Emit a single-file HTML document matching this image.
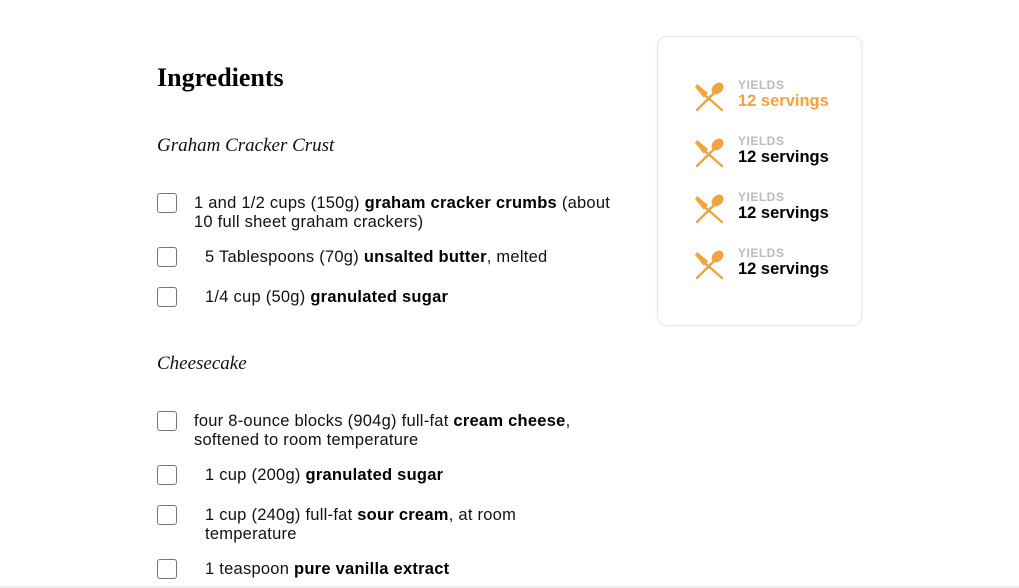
<!DOCTYPE html>
<html><head><meta charset="utf-8"><style>
body{margin:0;width:1019px;height:588px;background:#fff;position:relative;overflow:hidden;font-family:"Liberation Sans",sans-serif;color:#111}
h2{position:absolute;margin:0;left:157px;top:63px;font:bold 26px "Liberation Serif",serif;color:#000}
.sub{position:absolute;font:italic 19px "Liberation Serif",serif;left:157px;color:#111}
.cb{position:absolute;left:157px;width:18px;height:18px;border:1px solid #777;border-radius:3px}
.t{position:absolute;font-size:16.5px;line-height:19px;letter-spacing:0.25px;white-space:nowrap}
b{font-weight:bold;color:#000}
.card{position:absolute;left:657px;top:36px;width:203px;height:288px;border:1px solid #e8e8e8;border-radius:10px;box-shadow:0 0 4px rgba(0,0,0,.06)}
.y{position:absolute;left:738px;font-size:12px;font-weight:bold;color:#bbb;letter-spacing:.5px}
.s{position:absolute;left:738px;font-size:16.5px;font-weight:bold;color:#000}
.ic{position:absolute;left:694px}
.bot{position:absolute;left:0;top:586px;width:1019px;height:2px;background:#eee}
</style></head><body>
<h2>Ingredients</h2>
<div class="sub" style="top:135px">Graham Cracker Crust</div>
<div class="cb" style="top:193px"></div>
<div class="t" style="left:194px;top:194px">1 and 1/2 cups (150g) <b>graham cracker crumbs</b> (about<br>10 full sheet graham crackers)</div>
<div class="cb" style="top:247px"></div>
<div class="t" style="left:205px;top:248px">5 Tablespoons (70g) <b>unsalted butter</b>, melted</div>
<div class="cb" style="top:287px"></div>
<div class="t" style="left:205px;top:288px">1/4 cup (50g) <b>granulated sugar</b></div>
<div class="sub" style="top:353px">Cheesecake</div>
<div class="cb" style="top:411px"></div>
<div class="t" style="left:194px;top:412px">four 8-ounce blocks (904g) full-fat <b>cream cheese</b>,<br>softened to room temperature</div>
<div class="cb" style="top:465px"></div>
<div class="t" style="left:205px;top:466px">1 cup (200g) <b>granulated sugar</b></div>
<div class="cb" style="top:505px"></div>
<div class="t" style="left:205px;top:506px">1 cup (240g) full-fat <b>sour cream</b>, at room<br>temperature</div>
<div class="cb" style="top:559px"></div>
<div class="t" style="left:205px;top:560px">1 teaspoon <b>pure vanilla extract</b></div>
<div class="bot"></div>
<div class="card"></div>
<svg width="0" height="0" style="position:absolute"><defs><g id="k">
<path d="M20 12 L3 29" stroke="#f2a33a" stroke-width="2.4" stroke-linecap="round"/>
<ellipse cx="23.5" cy="7.5" rx="5" ry="6.8" transform="rotate(45 23.5 7.5)" fill="#f2a33a"/>
<path d="M12 15 L28 29" stroke="#f2a33a" stroke-width="2.4" stroke-linecap="round"/>
<path d="M1 6 L3 3 L14 12 L10 17 Z" fill="#f2a33a"/>
</g></defs></svg>
<svg class="ic" style="top:81px" width="31" height="31"><use href="#k"/></svg>
<svg class="ic" style="top:137px" width="31" height="31"><use href="#k"/></svg>
<svg class="ic" style="top:193px" width="31" height="31"><use href="#k"/></svg>
<svg class="ic" style="top:249px" width="31" height="31"><use href="#k"/></svg>
<div class="y" style="top:78px">YIELDS</div><div class="s" style="top:92px;color:#f2a33a">12 servings</div>
<div class="y" style="top:134px">YIELDS</div><div class="s" style="top:148px">12 servings</div>
<div class="y" style="top:190px">YIELDS</div><div class="s" style="top:204px">12 servings</div>
<div class="y" style="top:246px">YIELDS</div><div class="s" style="top:260px">12 servings</div>
</body></html>
